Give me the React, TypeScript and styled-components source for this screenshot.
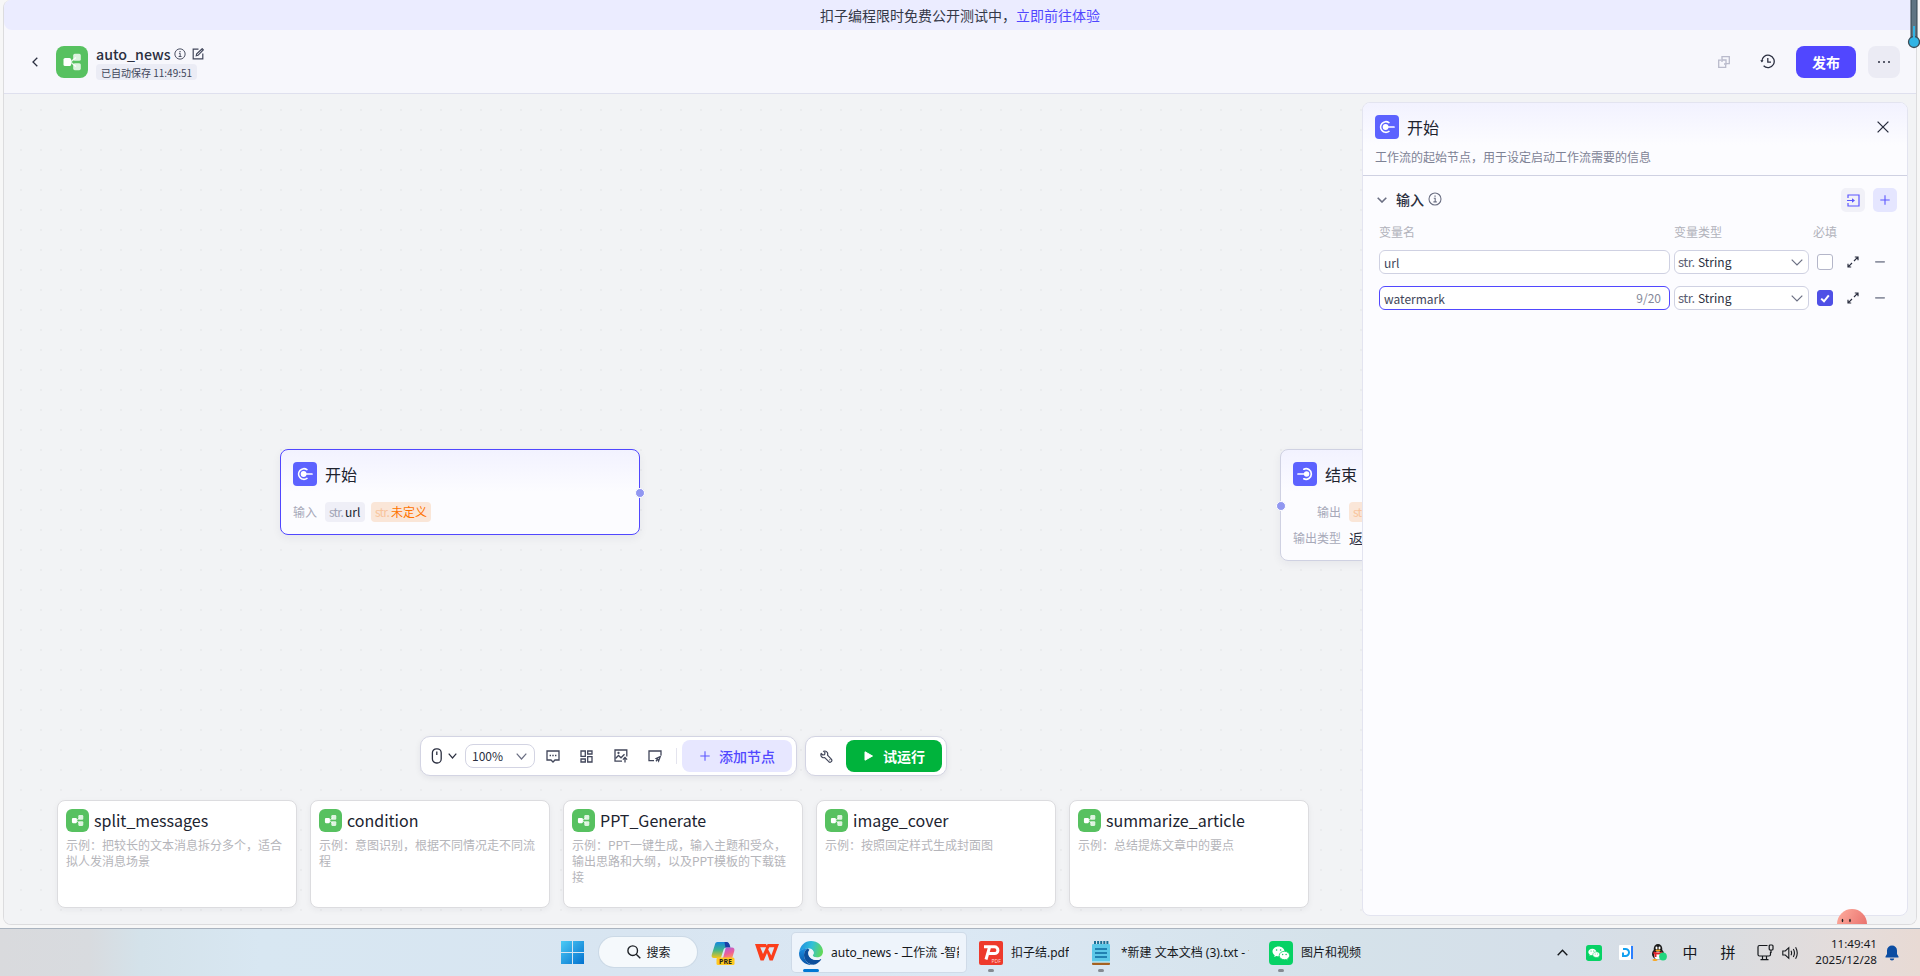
import React from "react";
import styled, { createGlobalStyle, css } from "styled-components";

const GlobalStyle = createGlobalStyle`
  * { box-sizing: border-box; }
  body {
    margin: 0;
    background: #f7f7f7;
    color: #2b2f40;
    font-family: "Noto Sans CJK SC", sans-serif;
    overflow: hidden;
  }
  svg { display: block; flex: none; }
`;

const Screen = styled.div`
  width: 1920px;
  height: 976px;
  display: flex;
  flex-direction: column;
  overflow: hidden;
  position: relative;
`;

const BrowserWindow = styled.div`
  height: 925px;
  margin: 0 3px 3px 3px;
  border: 1px solid #dcdcde;
  border-top: 0;
  border-radius: 8px;
  background: #f7f7fc;
  display: flex;
  flex-direction: column;
  overflow: hidden;
  position: relative;
`;

const Banner = styled.div`
  height: 30px;
  flex: none;
  border-radius: 0 0 0 8px;
  background: #ebecff;
  display: flex;
  justify-content: center;
  font-size: 14px;
  line-height: 31px;
  color: #343848;
`;

const BannerLink = styled.span`
  color: #5147ff;
`;

const Header = styled.header`
  height: 64px;
  flex: none;
  padding: 0 16px 0 28px;
  border-bottom: 1px solid #dfe0ee;
  display: flex;
  align-items: center;
`;

const Logo = styled.div<{ $size: number; $radius: number }>`
  width: ${(p) => p.$size}px;
  height: ${(p) => p.$size}px;
  border-radius: ${(p) => p.$radius}px;
  background: #57c160;
  display: grid;
  place-items: center;
  flex: none;
`;

const TitleBlock = styled.div`
  margin: 1px 0 0 8px;
  height: 36px;
  display: flex;
  flex-direction: column;
  align-items: flex-start;
`;

const TitleLine = styled.div`
  height: 20px;
  display: flex;
  align-items: center;
  font-size: 14.2px;
  font-weight: 500;
  line-height: 20px;
`;

const SavedTag = styled.span`
  height: 16px;
  padding: 0 5px;
  border-radius: 4px;
  background: #ebecf5;
  font-size: 10px;
  line-height: 17px;
  color: #41465a;
  white-space: nowrap;
`;

const HeaderActions = styled.div`
  margin-left: auto;
  display: flex;
  align-items: center;
`;

const PublishButton = styled.div`
  width: 60px;
  height: 32px;
  border-radius: 8px;
  background: #5147ff;
  color: #fff;
  font-size: 14px;
  font-weight: 700;
  line-height: 32px;
  text-align: center;
`;

const MoreButton = styled.div`
  width: 32px;
  height: 32px;
  margin-left: 12px;
  border-radius: 8px;
  background: #ebebf4;
  display: grid;
  place-items: center;
`;

const Canvas = styled.main`
  flex: 1;
  position: relative;
  display: flex;
  flex-direction: column;
  justify-content: flex-end;
  background: radial-gradient(circle, #ebecee 1.1px, transparent 1.5px) 7px 6px / 20px 20px #f2f3f5;
`;

const Node = styled.section<{ $x: number; $y: number; $h: number; $selected?: boolean }>`
  position: absolute;
  left: ${(p) => p.$x}px;
  top: ${(p) => p.$y}px;
  width: 360px;
  height: ${(p) => p.$h}px;
  padding: 12px;
  border: 1px solid ${(p) => (p.$selected ? "#5147ff" : "#cfd1e2")};
  border-radius: 8px;
  background: linear-gradient(#f2f2ff, #fcfcff 42px);
  box-shadow: 0 3px 10px rgba(30, 30, 60, 0.06);
`;

const NodeTitle = styled.div`
  display: flex;
  align-items: center;
  gap: 8px;
  height: 24px;
  font-size: 16px;
  line-height: 24px;
  color: #20232f;
`;

const NodeRow = styled.div<{ $first?: boolean }>`
  display: flex;
  align-items: center;
  height: 20px;
  margin-top: ${(p) => (p.$first ? 16 : 6)}px;
  font-size: 12px;
  line-height: 20px;
`;

const NodeLabel = styled.span<{ $width: number }>`
  width: ${(p) => p.$width}px;
  margin-right: 8px;
  text-align: right;
  color: #a7a9b9;
  white-space: nowrap;
`;

const NodeValue = styled.span`
  font-size: 14px;
  color: #2b2f40;
`;

const VarTag = styled.span<{ $warn?: boolean }>`
  display: flex;
  height: 20px;
  min-width: 40px;
  margin-right: 6px;
  padding: 0 4px;
  border-radius: 4px;
  background: ${(p) => (p.$warn ? "#fae6d8" : "#efeff7")};
  color: ${(p) => (p.$warn ? "#ff7300" : "#20232f")};
  line-height: 20px;
  white-space: nowrap;
`;

const VarType = styled.span<{ $warn?: boolean }>`
  width: 16px;
  color: ${(p) => (p.$warn ? "#f8c49c" : "#a0a3b5")};
  letter-spacing: -0.8px;
`;

const Port = styled.span<{ $x: number; $y: number }>`
  position: absolute;
  left: ${(p) => p.$x}px;
  top: ${(p) => p.$y}px;
  width: 10px;
  height: 10px;
  border: 1px solid #fff;
  border-radius: 50%;
  background: #9197f1;
`;

const ToolRow = styled.div`
  display: flex;
  gap: 8px;
  margin: 0 0 24px 416px;
`;

const ToolGroup = styled.div<{ $width: number }>`
  width: ${(p) => p.$width}px;
  height: 40px;
  padding: 0 4px;
  border: 1px solid #d3d4e3;
  border-radius: 10px;
  background: #fff;
  box-shadow: 0 2px 6px rgba(30, 30, 60, 0.07);
  display: flex;
  align-items: center;
`;

const ZoomSelect = styled.div`
  width: 70px;
  height: 24px;
  margin-left: 8px;
  padding: 0 7px 0 6px;
  border: 1px solid #d3d4e3;
  border-radius: 8px;
  display: flex;
  align-items: center;
  justify-content: space-between;
  font-size: 12px;
  line-height: 22px;
`;

const ToolDivider = styled.span`
  width: 1px;
  height: 16px;
  margin-left: 14px;
  background: #e4e4ee;
`;

const ToolButton = styled.div<{ $primary?: boolean }>`
  height: 32px;
  margin-left: auto;
  border-radius: 8px;
  display: flex;
  align-items: center;
  font-size: 14px;
  line-height: 32px;
  ${(p) =>
    p.$primary
      ? css`
          width: 96px;
          padding-left: 18px;
          gap: 10px;
          background: #00b33c;
          color: #fff;
          font-weight: 700;
        `
      : css`
          width: 110px;
          padding-left: 18px;
          gap: 9px;
          background: #e7e7ff;
          color: #5147ff;
          font-weight: 500;
        `}
`;

const CardRow = styled.div`
  display: flex;
  gap: 13px;
  margin: 0 0 16px 53px;
`;

const Card = styled.article`
  width: 240px;
  height: 108px;
  padding: 8px 8px 0;
  border: 1px solid #dcdcdf;
  border-radius: 8px;
  background: #fff;
  box-shadow: 0 2px 6px rgba(30, 30, 60, 0.05);
`;

const CardTitle = styled.div`
  display: flex;
  align-items: center;
  gap: 5px;
  height: 23px;
  font-size: 16px;
  line-height: 23px;
  color: #20232f;
`;

const CardText = styled.p`
  margin: 5px 0 0;
  width: 218px;
  font-size: 12px;
  line-height: 16px;
  color: #b5b5ba;
`;

const SidePanel = styled.aside`
  position: absolute;
  left: 1358px;
  top: 8px;
  width: 546px;
  height: 814px;
  border: 1px solid #e3e4f0;
  border-radius: 8px;
  background: #fcfcff;
  overflow: hidden;
`;

const PanelHead = styled.div`
  height: 73px;
  padding: 12px 18px 0 12px;
  border-bottom: 1px solid #cfd1e2;
  background: linear-gradient(#f2f2ff, #fcfcff 42px);
`;

const PanelHeadTop = styled.div`
  display: flex;
  justify-content: space-between;
  align-items: center;
`;

const PanelDesc = styled.div`
  margin-top: 9px;
  font-size: 12px;
  line-height: 18px;
  color: #7e8295;
`;

const PanelBody = styled.div`
  padding: 12px 10px 0 13px;
`;

const SectionHead = styled.div`
  display: flex;
  align-items: center;
  height: 24px;
`;

const SectionLabel = styled.div`
  display: flex;
  align-items: center;
  gap: 4px;
  margin: -2px auto 0 9px;
  font-size: 14px;
  font-weight: 500;
  line-height: 22px;
`;

const IconButton = styled.span<{ $strong?: boolean }>`
  width: 24px;
  height: 24px;
  border-radius: 5px;
  display: grid;
  place-items: center;
  background: ${(p) => (p.$strong ? "#e5e6ff" : "#f1f1f8")};
`;

const FieldGrid = styled.div`
  display: grid;
  grid-template-columns: 291px 135px 16px 16px 16px;
  align-items: center;
  padding-left: 3px;
  column-gap: 4px;
`;

const FieldHead = styled(FieldGrid)`
  height: 20px;
  margin-top: 10px;
  font-size: 12px;
  line-height: 20px;
  color: #b1b2bb;
  white-space: nowrap;
`;

const FieldRow = styled(FieldGrid)<{ $gap: number }>`
  margin-top: ${(p) => p.$gap}px;
  grid-template-columns: 291px 135px 16px 12px 10px;
`;

const Field = styled.div<{ $focus?: boolean }>`
  height: 24px;
  padding: 1px 8px 0 4px;
  border: 1px solid ${(p) => (p.$focus ? "#5147ff" : "#cfd1e2")};
  border-radius: 6px;
  background: #fff;
  display: flex;
  justify-content: space-between;
  font-size: 12px;
  line-height: 22px;
  color: #41465a;
`;

const Counter = styled.span`
  color: #85899a;
  line-height: 20px;
`;

const Select = styled.div`
  height: 24px;
  padding: 0 5px 0 3px;
  border: 1px solid #cfd1e2;
  border-radius: 6px;
  background: #fff;
  display: flex;
  align-items: center;
  font-size: 12px;
  line-height: 22px;
  color: #2b2f40;
`;

const SelectType = styled.span`
  width: 20px;
  color: #5c6074;
  font-size: 13px;
  line-height: 20px;
  letter-spacing: -0.5px;
`;

const Checkbox = styled.span<{ $on?: boolean }>`
  width: 16px;
  height: 16px;
  margin-left: 4px;
  border: 1px solid ${(p) => (p.$on ? "#4f50e6" : "#b4b6c9")};
  border-radius: 3px;
  background: ${(p) => (p.$on ? "#4f50e6" : "#fff")};
  display: grid;
  place-items: center;
`;

const Expand = styled.svg`
  margin-left: 14px;
`;

const Minus = styled.svg`
  margin-left: 26px;
`;

const Spacer = styled.span<{ $w?: number }>`
  ${(p) => (p.$w ? `width: ${p.$w}px; flex: none;` : "flex: 1;")}
`;

const Pet = styled.div`
  position: absolute;
  left: 1833px;
  bottom: 0;
  width: 30px;
  height: 15px;
  overflow: hidden;
`;

const Gauge = styled.div`
  position: absolute;
  left: 1907px;
  top: 0;
`;

const Taskbar = styled.footer`
  height: 48px;
  flex: none;
  border-top: 1px solid #a9b3bf;
  background: linear-gradient(
    90deg,
    #d9dadd 0,
    #d8dbdf 90px,
    #d4e2ea 140px,
    #d8e7f2 260px,
    #d8e5f1 640px,
    #dbe8f4 960px,
    #d5e2ea 1340px,
    #d5dfe9 1560px,
    #dadde1 1720px,
    #e5dcda 1860px,
    #e8dad4 1920px
  );
  display: flex;
  align-items: center;
  padding-left: 561px;
  font-family: "Noto Sans", "Noto Sans CJK SC", sans-serif;
  font-size: 12px;
  color: #15181c;
`;

const SearchPill = styled.div`
  width: 98px;
  height: 30px;
  margin: -1px 14px 0 15px;
  padding-left: 2px;
  border-radius: 15px;
  background: #f5f9fc;
  box-shadow: 0 0 0 1px rgba(180, 195, 210, 0.35);
  display: flex;
  align-items: center;
  justify-content: center;
  gap: 5px;
`;

const Task = styled.div<{ $width: number; $active?: boolean }>`
  width: ${(p) => p.$width}px;
  height: 39px;
  padding: 0 7px;
  border-radius: 4px;
  display: flex;
  align-items: center;
  gap: 8px;
  ${(p) =>
    p.$active &&
    css`
      background: #eef4fb;
      box-shadow: 0 0 0 1px rgba(190, 200, 215, 0.4);
    `}
`;

const TaskIcon = styled.div<{ $active?: boolean }>`
  position: relative;
  width: 24px;
  height: 24px;
  display: grid;
  place-items: center;
  flex: none;
  &::after {
    content: "";
    position: absolute;
    bottom: -7px;
    left: ${(p) => (p.$active ? 4 : 9)}px;
    width: ${(p) => (p.$active ? 16 : 6)}px;
    height: 3px;
    border-radius: 2px;
    background: ${(p) => (p.$active ? "#0078d4" : "#858b92")};
  }
`;

const TaskText = styled.span`
  overflow: hidden;
  white-space: nowrap;
  line-height: 20px;
`;

const Tray = styled.div`
  margin-left: auto;
  padding-right: 21px;
  display: flex;
  align-items: center;
`;

const ImeChar = styled.span`
  width: 16px;
  margin-top: -2px;
  font-family: "Noto Sans CJK SC", sans-serif;
  font-size: 15px;
  line-height: 20px;
  text-align: center;
`;

const Clock = styled.div`
  width: 70px;
  text-align: right;
  font-size: 11.6px;
  line-height: 16px;
  margin-top: -1px;
`;

const FlowGlyph = ({ size }: { size: number }) => (
  <svg width={size} height={size} viewBox="0 0 32 32" fill="#fff">
    <path d="M14.5 16 20 11.5M14.5 16 20 20.5" stroke="#fff" strokeWidth="1.4" opacity=".85" />
    <rect x="7.5" y="12" width="7.600" height="8" rx="1.6" />
    <rect x="17.200" y="7.8" width="7.600" height="7" rx="1.6" opacity=".8" />
    <rect x="17.200" y="17.2" width="7.600" height="7" rx="1.6" opacity=".8" />
  </svg>
);

const NodeIcon = ({ flip }: { flip?: boolean }) => (
  <svg width="24" height="24" viewBox="0 0 24 24">
    <rect width="24" height="24" rx="4" fill="#5c62ff" />
    {flip ? (
      <g stroke="#fff" fill="none" strokeWidth="1.7" strokeLinecap="round">
        <path d="M10.800 7.200a5.300 5.300 0 1 1 0 9.600" />
        <path d="M5 12h8" />
        <circle cx="13.6" cy="12" r="2.7" fill="#fff" stroke="none" />
      </g>
    ) : (
      <g stroke="#fff" fill="none" strokeWidth="1.7" strokeLinecap="round">
        <path d="M13.9 7.600a5.300 5.300 0 1 0 0 8.800" />
        <path d="M11 12h8" />
        <circle cx="10.600" cy="12" r="2.900" fill="#fff" stroke="none" />
      </g>
    )}
  </svg>
);

const InfoIcon = ({ size, color }: { size: number; color: string }) => (
  <svg width={size} height={size} viewBox="0 0 14 14" fill="none" stroke={color} strokeWidth="1.1">
    <circle cx="7" cy="7" r="6" />
    <path d="M5.8 6.2h1.4v3.6M5.4 9.9h3.4" />
    <path d="M6.4 4.2h1.3" strokeWidth="1.3" />
  </svg>
);

const Chevron = ({ w, h, color, sw = 1.2 }: { w: number; h: number; color: string; sw?: number }) => (
  <svg width={w} height={h} viewBox={`0 0 ${w} ${h}`} fill="none" stroke={color} strokeWidth={sw}>
    <path d={`M.7 .7 ${w / 2} ${h - 1} ${w - 0.7} .7`} />
  </svg>
);

const Plus = ({ size }: { size: number }) => (
  <svg width={size} height={size} viewBox="0 0 10 10" stroke="#5c57ff" strokeWidth="1.1">
    <path d="M5 .3v9.4M.3 5h9.4" />
  </svg>
);

const WeChat = ({ size }: { size: number }) => (
  <svg width={size} height={size} viewBox="0 0 24 24">
    <rect width="24" height="24" rx="4" fill="#07d265" />
    <path d="M9.500 5.500c-3.300 0-6 2.200-6 4.900 0 1.500.9 2.900 2.200 3.800l-.5 1.900 2.200-1.100c.7.2 1.400.3 2.100.3 3.300 0 6-2.200 6-4.900s-2.700-4.900-6-4.900z" fill="#fff" />
    <path d="M15.400 10.300c-2.900 0-5.200 1.900-5.200 4.200s2.300 4.200 5.200 4.200c.6 0 1.200-.1 1.700-.2l1.900 1-.5-1.700c1.300-.8 2.100-2 2.100-3.300 0-2.300-2.300-4.200-5.200-4.200z" fill="#fff" stroke="#07d265" strokeWidth=".8" />
    <g fill="#07c160">
      <circle cx="7.600" cy="9" r=".8" />
      <circle cx="11.600" cy="9" r=".8" />
      <circle cx="13.700" cy="13.500" r=".7" />
      <circle cx="17.100" cy="13.500" r=".7" />
    </g>
  </svg>
);

const ToolIcons = {
  mouse: (
    <svg width="12" height="16" viewBox="0 0 12 16" fill="none" stroke="#2b2f40" strokeWidth="1.300">
      <rect x="1.400" y=".8" width="8.800" height="14.200" rx="4" />
      <path d="M5.800 3.500v3.500" />
    </svg>
  ),
  comment: (
    <svg width="14" height="13" viewBox="0 0 14 13" fill="none" stroke="#41465a" strokeWidth="1.300">
      <path d="M1 1h12v9H9L7 12 5 10H1z" />
      <path d="M3.600 5.600h1.400M6.300 5.600h1.400M9 5.600h1.400" strokeWidth="1.500" />
    </svg>
  ),
  layout: (
    <svg width="13" height="13" viewBox="0 0 13 13" fill="none" stroke="#41465a" strokeWidth="1.300">
      <path d="M1 1h4.300v5.300H1zM7.700 1H12v3H7.700zM1 9h4.300v3H1zM7.700 6.700H12V12H7.700z" />
    </svg>
  ),
  image: (
    <svg width="14" height="14" viewBox="0 0 14 14" fill="none" stroke="#41465a" strokeWidth="1.300">
      <path d="M8 12.200H1V1h11.800v6.500" />
      <path d="M1.500 9.500 4.500 6.500l2.500 2.300 3.500-3.600" />
      <circle cx="4.500" cy="3.900" r=".5" />
      <path d="M11 13.500V8.600M8.900 10.600 11 8.500l2.100 2.100" />
    </svg>
  ),
  note: (
    <svg width="14" height="13" viewBox="0 0 14 13" fill="none" stroke="#41465a" strokeWidth="1.300">
      <path d="M6 10.600H1V1h12v4.500" />
      <path d="M12.200 6.700 8.200 8.500l1.600.8.800 1.800z" />
      <path d="M9.500 9.500 8 11.200" />
    </svg>
  ),
  wrench: (
    <svg width="13" height="13" viewBox="0 0 13 13" fill="none" stroke="#41465a" strokeWidth="1.200" strokeLinejoin="round">
      <path d="M3.500 1.200 5 2.700 4.600 4.600 2.700 5 1.200 3.500c-.6 1.500-.1 3 .9 3.700.8.600 1.700.7 2.600.4l4.100 4.100c.8.700 1.900.6 2.500 0s.7-1.700 0-2.500L7.500 5.100C8 3.700 7.600 2.600 6.800 1.900 5.900 1 4.700.8 3.500 1.200z" />
      <path d="M9.500 9.500 10.200 10.200" />
    </svg>
  ),
};

const CopilotIcon = () => (
  <svg width="24" height="24" viewBox="0 0 24 24">
    <defs>
      <linearGradient id="cpA" x1="0" y1="0" x2="0" y2="1">
        <stop offset="0" stopColor="#1587dd" />
        <stop offset=".5" stopColor="#3fb58c" />
        <stop offset="1" stopColor="#f5c518" />
      </linearGradient>
      <linearGradient id="cpB" x1="0" y1="0" x2=".4" y2="1">
        <stop offset="0" stopColor="#a35bea" />
        <stop offset=".6" stopColor="#ec5f9a" />
        <stop offset="1" stopColor="#ff9a56" />
      </linearGradient>
    </defs>
    <path d="M6.500 1h9c1.500 0 2.400 1 2.900 2.400l1 3.100h-4c-1.700 0-2.500 1-3 2.500l-2 6.500c-.4 1.200-1.200 1.500-2.400 1.500H3C.9 17 .2 15.400.8 13.400L4 3.200C4.400 1.900 5.200 1 6.500 1z" fill="url(#cpA)" />
    <path d="M13.500 1h2c1.500 0 2.400 1 2.900 2.400l1 3.100h-5z" fill="#1b3fa6" />
    <path d="M15.500 6.500H21c2 0 2.800 1.600 2.300 3.400L21.500 16c-.5 1.600-1.500 3-3.300 3H9.500c1.500 0 2.200-1 2.600-2.300l2-7.500c.3-1.200.5-2.700 1.400-2.700z" fill="url(#cpB)" />
    <rect x="5.500" y="16.500" width="18" height="7.500" rx="1.500" fill="#ffc81f" />
    <text x="14.500" y="23" fontSize="7" fontWeight="700" textAnchor="middle" fontFamily="Noto Sans" fill="#1d1d1d">PRE</text>
  </svg>
);

const EdgeIcon = () => (
  <svg width="24" height="24" viewBox="0 0 24 24">
    <defs>
      <linearGradient id="edA" x1="0" y1=".3" x2="1" y2=".5">
        <stop offset="0" stopColor="#1f8fe0" />
        <stop offset=".5" stopColor="#31bfd8" />
        <stop offset="1" stopColor="#62d957" />
      </linearGradient>
      <linearGradient id="edB" x1="0" y1="0" x2="0" y2="1">
        <stop offset="0" stopColor="#1b8de0" />
        <stop offset="1" stopColor="#0a55a8" />
      </linearGradient>
    </defs>
    <path d="M.3 11C.9 4.800 5.800 0 12 0c6.600 0 12 4.700 12 10.500 0 3.700-2.800 6-6 6-2.400 0-4.300-.8-4.300-1.900 0-.6 1-1.200 1-2.800 0-2.200-2-4.300-5-4.300C5.500 7.500 2 9 .3 11z" fill="url(#edA)" />
    <path d="M.2 11C1.800 8.800 4.900 7.300 8.700 7.500c-2.200 1-3.700 3.600-3.700 6.500 0 5 3.800 9 8.500 9.900C6 24.500 0 19 0 12.500z" fill="url(#edB)" />
    <path d="M8.700 7.600C6.500 8.700 5 11 5 14c0 5.400 4.200 9.500 9.500 9.700 3-.5 5.800-2.300 7.600-5 .3-.5-.1-.8-.6-.5-4.800 2.300-12-.2-12.200-6 0-1.400.500-2.400 1.400-3.300z" fill="#0c4f9c" />
    <path d="M14.700 11.800c0-1.600-1.200-3.100-3-3.800C10 9 9.200 10.500 9.300 12.300c.2 3.900 3.500 6.300 7 6.500 2 .1 3.800-.2 5.200-.9L22 16c-1.200.4-2.500.6-4 .6-2.400 0-4.300-.8-4.300-2 0-.6 1-1.200 1-2.800z" fill="#eef4fb" opacity=".95" />
  </svg>
);

const cards = [
  { name: "split_messages", text: "示例：把较长的文本消息拆分多个，适合拟人发消息场景" },
  { name: "condition", text: "示例：意图识别，根据不同情况走不同流程" },
  { name: "PPT_Generate", text: "示例：PPT一键生成，输入主题和受众，输出思路和大纲，以及PPT模板的下载链接" },
  { name: "image_cover", text: "示例：按照固定样式生成封面图" },
  { name: "summarize_article", text: "示例：总结提炼文章中的要点" },
];

const VariableRow = ({ name, counter, required, gap }: { name: string; counter?: string; required?: boolean; gap: number }) => (
  <FieldRow $gap={gap}>
    <Field $focus={!!counter}>
      <span>{name}</span>
      {counter && <Counter>{counter}</Counter>}
    </Field>
    <Select>
      <SelectType>str.</SelectType>
      String
      <Spacer />
      <Chevron w={12} h={7} color="#6b6f83" />
    </Select>
    <Checkbox $on={required}>
      {required && (
        <svg width="10" height="9" viewBox="0 0 10 9" fill="none" stroke="#fff" strokeWidth="2">
          <path d="M1.200 4.600 4 7.300 8.800 1.300" />
        </svg>
      )}
    </Checkbox>
    <Expand width="12" height="12" viewBox="0 0 12 12" fill="none" stroke="#2b2f40" strokeWidth="1.200">
      <path d="M7.800 1H11v3.200M10.800 1.200 7 5M1 7.800V11h3.200M1.200 10.800 5 7" />
    </Expand>
    <Minus width="10" height="2" viewBox="0 0 10 2">
      <rect width="10" height="1.700" rx=".8" fill="#8f93a3" />
    </Minus>
  </FieldRow>
);

export default function App() {
  return (
    <Screen>
      <GlobalStyle />
      <BrowserWindow>
        <Banner>
          扣子编程限时免费公开测试中，<BannerLink>立即前往体验</BannerLink>
        </Banner>
        <Header>
          <svg width="6" height="10" viewBox="0 0 6 10" fill="none" stroke="#2b2f40" strokeWidth="1.300">
            <path d="M5.300.7 1 5l4.300 4.300" />
          </svg>
          <Spacer $w={18} />
          <Logo $size={32} $radius={8}>
            <FlowGlyph size={32} />
          </Logo>
          <TitleBlock>
            <TitleLine>
              auto_news
              <Spacer $w={3} />
              <InfoIcon size={12} color="#41465a" />
              <Spacer $w={6} />
              <svg width="12" height="12" viewBox="0 0 12 12" fill="none" stroke="#41465a" strokeWidth="1.200">
                <path d="M6.500 1.200H1.200v9.600h9.600V5.500" />
                <path d="M4.300 7.700 4.700 5.900 10.200.7l1.100 1.100L6 7.300z" />
              </svg>
            </TitleLine>
            <SavedTag>已自动保存 11:49:51</SavedTag>
          </TitleBlock>
          <HeaderActions>
            <svg width="12" height="12" viewBox="0 0 12 12" fill="none" stroke="#b9bacb" strokeWidth="1.300">
              <path d="M4 3.500V.7h7.300v7H8.500M4 6V4h4v4H6" />
              <path d="M3.500 4.200H.7v7.100h7V8.500" />
            </svg>
            <Spacer $w={30} />
            <svg width="15" height="15" viewBox="0 0 15 15" fill="none" stroke="#2b2f40" strokeWidth="1.300">
              <path d="M1.800 7.500a6.200 6.200 0 1 1 1.800 4.300M7.800 4v4.200h3.200" />
              <path d="M.3 6.300h3.200L1.900 8.500z" fill="#2b2f40" stroke="none" />
            </svg>
            <Spacer $w={21} />
            <PublishButton>发布</PublishButton>
            <MoreButton>
              <svg width="12" height="2" viewBox="0 0 12 2" fill="#2b2f40">
                <circle cx="1" cy="1" r="1" />
                <circle cx="6" cy="1" r="1" />
                <circle cx="11" cy="1" r="1" />
              </svg>
            </MoreButton>
          </HeaderActions>
        </Header>
        <Canvas>
          <Node $x={276} $y={355} $h={86} $selected>
            <NodeTitle>
              <NodeIcon />
              开始
            </NodeTitle>
            <NodeRow $first>
              <NodeLabel $width={24}>输入</NodeLabel>
              <VarTag>
                <VarType>str.</VarType>url
              </VarTag>
              <VarTag $warn>
                <VarType $warn>str.</VarType>未定义
              </VarTag>
            </NodeRow>
            <Port $x={354} $y={38} />
          </Node>
          <Node $x={1276} $y={355} $h={112}>
            <NodeTitle>
              <NodeIcon flip />
              结束
            </NodeTitle>
            <NodeRow $first>
              <NodeLabel $width={48}>输出</NodeLabel>
              <VarTag $warn>
                <VarType $warn>str.</VarType>未定义
              </VarTag>
            </NodeRow>
            <NodeRow>
              <NodeLabel $width={48}>输出类型</NodeLabel>
              <NodeValue>返回变量</NodeValue>
            </NodeRow>
            <Port $x={-5} $y={51} />
          </Node>
          <ToolRow>
            <ToolGroup $width={377}>
              <Spacer $w={6} />
              {ToolIcons.mouse}
              <Spacer $w={5} />
              <Chevron w={9} h={6} color="#2b2f40" />
              <ZoomSelect>
                100%
                <Chevron w={11} h={7} color="#6b6f83" />
              </ZoomSelect>
              <Spacer $w={11} />
              {ToolIcons.comment}
              <Spacer $w={20} />
              {ToolIcons.layout}
              <Spacer $w={21} />
              {ToolIcons.image}
              <Spacer $w={20} />
              {ToolIcons.note}
              <ToolDivider />
              <ToolButton>
                <Plus size={10} />
                添加节点
              </ToolButton>
            </ToolGroup>
            <ToolGroup $width={142}>
              <Spacer $w={10} />
              {ToolIcons.wrench}
              <ToolButton $primary>
                <svg width="9" height="10" viewBox="0 0 9 10" fill="#fff">
                  <path d="M1 .8v8.400L8.500 5z" stroke="#fff" strokeLinejoin="round" />
                </svg>
                试运行
              </ToolButton>
            </ToolGroup>
          </ToolRow>
          <CardRow>
            {cards.map((c) => (
              <Card key={c.name}>
                <CardTitle>
                  <Logo $size={23} $radius={6}>
                    <FlowGlyph size={21} />
                  </Logo>
                  {c.name}
                </CardTitle>
                <CardText>{c.text}</CardText>
              </Card>
            ))}
          </CardRow>
          <SidePanel>
            <PanelHead>
              <PanelHeadTop>
                <NodeTitle>
                  <NodeIcon />
                  开始
                </NodeTitle>
                <svg width="12" height="12" viewBox="0 0 12 12" stroke="#2b2f40" strokeWidth="1.300">
                  <path d="M.6.6 11.400 11.400M11.400.6.6 11.400" />
                </svg>
              </PanelHeadTop>
              <PanelDesc>工作流的起始节点，用于设定启动工作流需要的信息</PanelDesc>
            </PanelHead>
            <PanelBody>
              <SectionHead>
                <Spacer $w={1} />
                <Chevron w={10} h={6} color="#6b6f83" sw={1.6} />
                <SectionLabel>
                  输入
                  <InfoIcon size={14} color="#6b6f83" />
                </SectionLabel>
                <IconButton>
                  <svg width="13" height="13" viewBox="0 0 13 13" fill="none" stroke="#5c57ff" strokeWidth="1.200">
                    <path d="M1 4V1h11v11H1V9" />
                    <path d="M0 6.500h6" />
                    <path d="M5 4.300 8 6.500 5 8.700z" fill="#5c57ff" stroke="none" />
                  </svg>
                </IconButton>
                <Spacer $w={8} />
                <IconButton $strong>
                  <Plus size={10} />
                </IconButton>
              </SectionHead>
              <FieldHead>
                <span>变量名</span>
                <span>变量类型</span>
                <span>必填</span>
              </FieldHead>
              <VariableRow name="url" gap={8} />
              <VariableRow name="watermark" counter="9/20" required gap={12} />
            </PanelBody>
          </SidePanel>
          <Pet>
            <svg width="30" height="30" viewBox="0 0 30 30">
              <defs>
                <linearGradient id="pet" x1="0" y1="0" x2="1" y2=".6">
                  <stop offset="0" stopColor="#ffae9f" />
                  <stop offset="1" stopColor="#e8706c" />
                </linearGradient>
              </defs>
              <circle cx="15" cy="15" r="15" fill="url(#pet)" />
              <ellipse cx="5.500" cy="11.500" rx=".8" ry="1.700" fill="#222" />
              <ellipse cx="13" cy="11.500" rx=".8" ry="1.700" fill="#222" />
            </svg>
          </Pet>
        </Canvas>
      </BrowserWindow>
      <Gauge>
        <svg width="13" height="50" viewBox="0 0 13 50">
          <rect x="4" y="-2" width="6" height="42" fill="#5f7583" stroke="#33444f" />
          <circle cx="7" cy="42" r="5.500" fill="#31b4e4" stroke="#3d4d57" strokeWidth="1.300" />
          <rect x="6" y="26" width="2" height="12" fill="#31b4e4" />
        </svg>
      </Gauge>
      <Taskbar>
        <svg width="23" height="23" viewBox="0 0 23 23">
          <defs>
            <linearGradient id="win" x1="0" y1="0" x2="1" y2="1">
              <stop offset="0" stopColor="#4ccbf5" />
              <stop offset="1" stopColor="#0271cf" />
            </linearGradient>
          </defs>
          <path d="M0 0h11v11H0zM12 0h11v11H12zM0 12h11v11H0zM12 12h11v11H12z" fill="url(#win)" />
        </svg>
        <SearchPill>
          <svg width="14" height="14" viewBox="0 0 14 14" fill="none" stroke="#1d2126" strokeWidth="1.400">
            <circle cx="5.700" cy="5.700" r="4.800" />
            <path d="M9.200 9.200 13.300 13.300" />
          </svg>
          搜索
        </SearchPill>
        <CopilotIcon />
        <Spacer $w={20} />
        <svg width="24" height="17" viewBox="0 0 24 17">
          <path d="M0 0h11l1.800 3.300H5.200L8 10l4.600-10H24l-6.200 16.500h-3.200L12 9l-3.300 7.500H5.500z" fill="#fb3e1c" />
          <path d="M14.300 3.300h5L16.300 11.500 13.200 5.600z" fill="#dbe7f3" />
        </svg>
        <Spacer $w={13} />
        <Task $width={174} $active>
          <TaskIcon $active>
            <EdgeIcon />
          </TaskIcon>
          <TaskText>auto_news - 工作流 -智能体</TaskText>
        </Task>
        <Spacer $w={6} />
        <Task $width={106}>
          <TaskIcon>
            <svg width="24" height="24" viewBox="0 0 24 24">
              <rect width="24" height="24" rx="2" fill="#ee3a2c" />
              <path d="M5 5.800h10.500a3.400 3.400 0 0 1 0 6.800H10M10.600 6 7 18.500" stroke="#fff" strokeWidth="3" fill="none" />
              <text x="12.500" y="21.500" fontSize="5" fontFamily="Noto Sans" fill="#ffd9d5">PDF</text>
            </svg>
          </TaskIcon>
          <TaskText>扣子结.pdf</TaskText>
        </Task>
        <Spacer $w={4} />
        <Task $width={174}>
          <TaskIcon>
            <svg width="24" height="24" viewBox="0 0 24 24">
              <rect x="3" y="3" width="18" height="20" rx="1" fill="#5cc8e8" />
              <rect x="3" y="21.500" width="18" height="2.500" rx="1" fill="#a5611f" />
              <path d="M3 21h18" stroke="#e9f6fb" />
              <path d="M6 8h12M6 12h12M6 16h12" stroke="#0d6a9e" strokeWidth="1.400" />
              <path d="M5 1.500h14.500" stroke="#1c6e94" strokeWidth="3" strokeDasharray="2 1.100" />
            </svg>
          </TaskIcon>
          <TaskText>*新建 文本文档 (3).txt - 记事本</TaskText>
        </Task>
        <Spacer $w={6} />
        <Task $width={120}>
          <TaskIcon>
            <WeChat size={24} />
          </TaskIcon>
          <TaskText>图片和视频</TaskText>
        </Task>
        <Tray>
          <svg width="11" height="7" viewBox="0 0 11 7" fill="none" stroke="#15181c" strokeWidth="1.400">
            <path d="M.7 6.200 5.500 1.200 10.300 6.200" />
          </svg>
          <Spacer $w={18} />
          <WeChat size={16} />
          <Spacer $w={17} />
          <svg width="14" height="15" viewBox="0 0 14 15">
            <rect width="12" height="15" rx="1" fill="#fff" />
            <rect x="12" y="1" width="2" height="13" fill="#2a7fff" />
            <path d="M4 4h2.500a3.200 3.200 0 0 1 0 7H4V7.500" fill="none" stroke="#12a0f0" strokeWidth="2" />
          </svg>
          <Spacer $w={18} />
          <svg width="16" height="17" viewBox="0 0 16 17">
            <ellipse cx="7" cy="10" rx="6" ry="5.500" fill="#1a1a1a" />
            <ellipse cx="7" cy="5" rx="4.300" ry="5" fill="#1a1a1a" />
            <ellipse cx="7" cy="11.500" rx="3.800" ry="4" fill="#fff" />
            <ellipse cx="5.500" cy="4" rx="1" ry="1.400" fill="#fff" />
            <ellipse cx="8.500" cy="4" rx="1" ry="1.400" fill="#fff" />
            <ellipse cx="7" cy="6.400" rx="2.600" ry=".9" fill="#f9a51a" />
            <path d="M2.500 8.500q4.500 2 9 0" stroke="#e0242b" strokeWidth="2" fill="none" />
            <path d="M4.500 9.500v3.500" stroke="#e0242b" strokeWidth="2" />
            <ellipse cx="4" cy="16" rx="2.600" ry="1" fill="#f9a51a" />
            <circle cx="12" cy="12.500" r="3.900" fill="#23d67e" />
          </svg>
          <Spacer $w={15} />
          <ImeChar>中</ImeChar>
          <Spacer $w={22} />
          <ImeChar>拼</ImeChar>
          <Spacer $w={21} />
          <svg width="17" height="17" viewBox="0 0 17 17" fill="none" stroke="#15181c" strokeWidth="1.200">
            <path d="M10.500 1.500H2.500q-1.500 0-1.500 1.500v7.500q0 1.500 1.500 1.500H12q1.500 0 1.500-1.500V8M5.500 12v3.500M9.500 12v3.500M3.500 15.700h8" />
            <rect x="12.200" y="1" width="3.800" height="5" rx="1" />
            <path d="M14 6v3" />
          </svg>
          <Spacer $w={8} />
          <svg width="17" height="14" viewBox="0 0 17 14" fill="none" stroke="#15181c" strokeWidth="1.100">
            <path d="M.8 5v4h2.500l3.500 3.300V1.700L3.300 5z" />
            <path d="M9 4.800q1.200 2.200 0 4.400M11.300 3q2.300 4 0 8M13.600 1.300q3.300 5.700 0 11.400" />
          </svg>
          <Spacer $w={8} />
          <Clock>
            11:49:41
            <br />
            2025/12/28
          </Clock>
          <Spacer $w={8} />
          <svg width="14" height="16" viewBox="0 0 14 16" fill="#0c4da2">
            <path d="M7 .5a5 5 0 0 0-5 5V9L.5 11.500v1h13v-1L12 9V5.500a5 5 0 0 0-5-5zM4.800 13.500a2.200 2 0 0 0 4.400 0z" />
          </svg>
        </Tray>
      </Taskbar>
    </Screen>
  );
}
